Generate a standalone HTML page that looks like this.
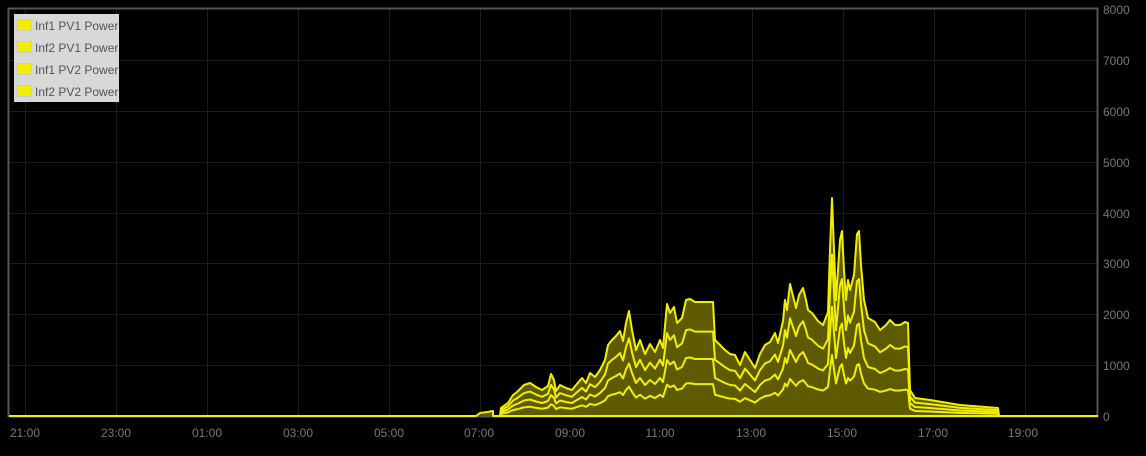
<!DOCTYPE html>
<html><head><style>
body{margin:0;background:#000;width:1146px;height:456px;overflow:hidden;font-family:"Liberation Sans",sans-serif}
</style></head><body>
<svg width="1146" height="456" xmlns="http://www.w3.org/2000/svg" style="position:absolute;left:0;top:0">
<defs>
<polyline id="c" vector-effect="non-scaling-stroke" points="500,416 501,408 508,403 513,395 517,392 524,385 530,383 536,387 542,390 548,386 551,374 554,380 556,391 560,385 566,388 572,390 576,385 582,378 586,383 590,373 595,377 600,370 605,360 608,345 612,340 616,336 620,331 623,341 626,323 629,311 632,330 636,350 640,340 645,354 650,344 655,352 660,340 663,348 667,304 670,313 674,307 677,323 682,318 686,300 690,299 695,302 713,302 715,340 720,345 725,350 730,354 735,355 740,365 745,352 750,360 755,368 760,354 765,345 770,342 775,333 778,343 783,321 785,300 787,310 790,284 793,296 796,308 799,295 803,288 806,300 808,310 812,313 818,321 823,325 828,312 830,250 832,198 834,250 836,300 838,270 840,240 842,231 844,270 846,300 848,280 850,290 854,275 857,234 859,231 861,265 864,300 868,318 875,322 880,330 886,325 890,320 895,325 900,325 905,322 908,323 910,390 915,398 930,400 960,405 998,408 999,416"/>
</defs>
<g stroke="#1c1c1c" stroke-width="1">
<line x1="8" y1="60.5" x2="1098" y2="60.5"/><line x1="8" y1="111.5" x2="1098" y2="111.5"/><line x1="8" y1="162.5" x2="1098" y2="162.5"/><line x1="8" y1="213.5" x2="1098" y2="213.5"/><line x1="8" y1="263.5" x2="1098" y2="263.5"/><line x1="8" y1="314.5" x2="1098" y2="314.5"/><line x1="8" y1="365.5" x2="1098" y2="365.5"/>
<line x1="25.5" y1="8" x2="25.5" y2="416"/><line x1="116.5" y1="8" x2="116.5" y2="416"/><line x1="207.5" y1="8" x2="207.5" y2="416"/><line x1="298.5" y1="8" x2="298.5" y2="416"/><line x1="389.5" y1="8" x2="389.5" y2="416"/><line x1="480.5" y1="8" x2="480.5" y2="416"/><line x1="570.5" y1="8" x2="570.5" y2="416"/><line x1="661.5" y1="8" x2="661.5" y2="416"/><line x1="752.5" y1="8" x2="752.5" y2="416"/><line x1="843.5" y1="8" x2="843.5" y2="416"/><line x1="934.5" y1="8" x2="934.5" y2="416"/><line x1="1025.5" y1="8" x2="1025.5" y2="416"/>
</g>
<rect x="8.5" y="8.5" width="1089" height="408" fill="none" stroke="#555" stroke-width="2"/>
<use href="#c" fill="#5e5a00" stroke="none"/>
<polygon points="476,416 480,413 487,412 493,411 493,416" fill="#5e5a00"/>
<g fill="none" stroke="#f2ee00" stroke-width="2" stroke-linejoin="round">
<use href="#c"/>
<use href="#c" transform="translate(0,416) scale(1,0.74) translate(0,-416)"/>
<use href="#c" transform="translate(0,416) scale(1,0.5) translate(0,-416)"/>
<use href="#c" transform="translate(0,416) scale(1,0.28) translate(0,-416)"/>
<polyline points="9,416 476,416 480,413 487,412 493,411 493,416 1098,416"/>
</g>
<g fill="#777" font-size="12" font-family="Liberation Sans,sans-serif">
<text x="1103" y="14">8000</text><text x="1103" y="65">7000</text><text x="1103" y="116">6000</text><text x="1103" y="167">5000</text><text x="1103" y="218">4000</text><text x="1103" y="268">3000</text><text x="1103" y="319">2000</text><text x="1103" y="370">1000</text><text x="1103" y="421">0</text>
<g text-anchor="middle">
<text x="25" y="437">21:00</text><text x="116" y="437">23:00</text><text x="207" y="437">01:00</text><text x="298" y="437">03:00</text><text x="389" y="437">05:00</text><text x="479" y="437">07:00</text><text x="570" y="437">09:00</text><text x="660" y="437">11:00</text><text x="751" y="437">13:00</text><text x="842" y="437">15:00</text><text x="933" y="437">17:00</text><text x="1023" y="437">19:00</text>
</g></g>
<rect x="14" y="14" width="105" height="88" fill="#d8d8d8"/>
<g fill="#f2ee00" stroke="#ccc"><rect x="16.5" y="19.5" width="15" height="11"/><rect x="16.5" y="41.5" width="15" height="11"/><rect x="16.5" y="63.5" width="15" height="11"/><rect x="16.5" y="85.5" width="15" height="11"/></g>
<g fill="#545454" font-size="12" font-family="Liberation Sans,sans-serif">
<text x="35" y="30">Inf1 PV1 Power</text><text x="35" y="52">Inf2 PV1 Power</text><text x="35" y="74">Inf1 PV2 Power</text><text x="35" y="96">Inf2 PV2 Power</text></g>
</svg>
</body></html>
